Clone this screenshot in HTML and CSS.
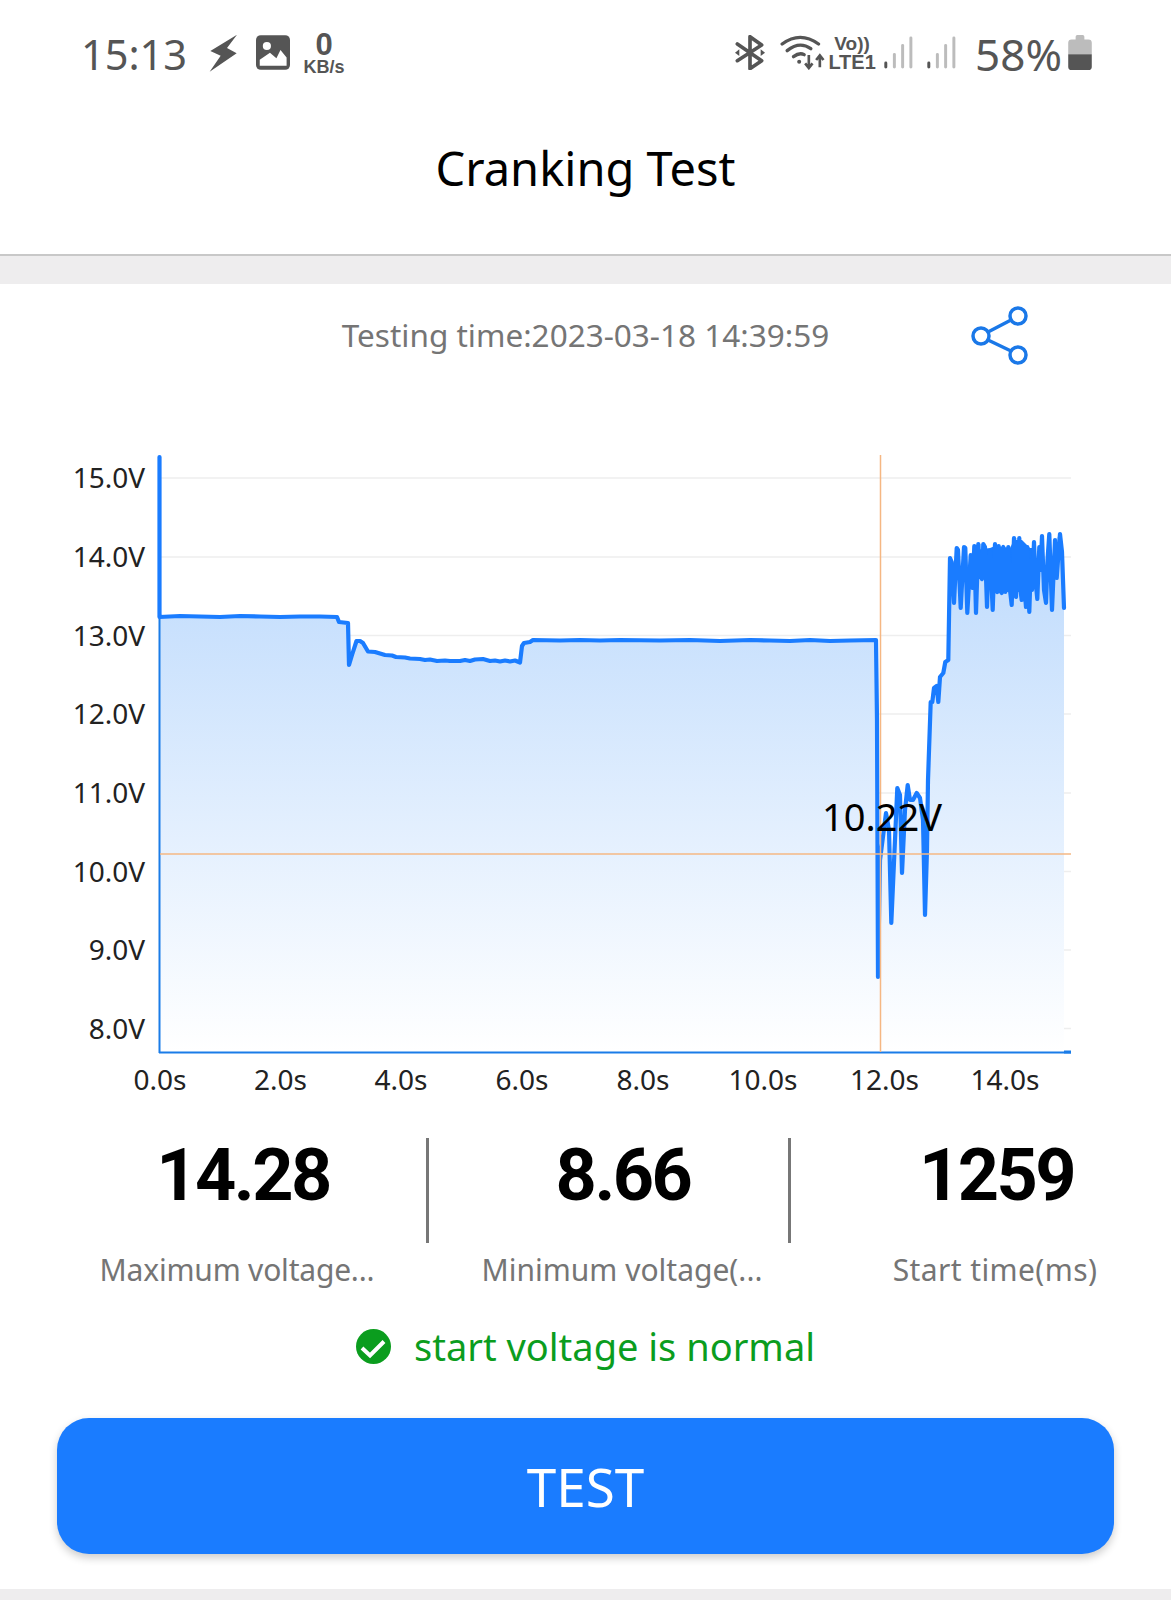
FILE: index.html
```html
<!DOCTYPE html>
<html lang="en">
<head>
  <meta charset="UTF-8" />
  <title>Cranking Test</title>
  <link rel="stylesheet" href="styles.css">
</head>
<body>
  <div class="status-bar">
    <div class="status-left">
      <span class="clock">15:13</span>
      <svg class="icon-bolt" viewBox="440 70 90 120"><polygon points="527,75 447,124 478,138 445,186 526,131 497,115" /></svg>
      <svg class="icon-image" viewBox="590 78 100 102">
        <rect x="590" y="78" width="100" height="102" rx="14" fill="#555" />
        <circle cx="622" cy="110" r="12" fill="#fff" />
        <path d="M601 168 V150 L631 130 L650 146 L662 122 L680 144 V168 Z" fill="#fff" />
      </svg>
      <div class="net-speed">
        <span class="net-value">0</span>
        <span class="net-unit">KB/s</span>
      </div>
    </div>
    <div class="status-right">
      <svg class="icon-bt" viewBox="45 75 90 105">
        <path d="M52 102 L125 152 L90 176 V80 L125 105 L52 152" fill="none" stroke="#555" stroke-width="11" stroke-linejoin="round" stroke-linecap="round" />
        <polygon points="45,128 58,118 58,138" fill="#555" />
        <polygon points="135,128 122,118 122,138" fill="#555" />
      </svg>
      <svg class="icon-wifi" viewBox="180 75 140 105">
        <g fill="none" stroke="#555" stroke-width="10" stroke-linecap="round">
          <path d="M186 102 Q240 62 295 102" />
          <path d="M201 122 Q238 92 272 116" />
          <path d="M220 140 Q238 126 252 134" />
        </g>
        <circle cx="237" cy="155" r="6" fill="#555" />
        <g fill="none" stroke="#555" stroke-width="8">
          <path d="M266 135 V172 M255 160 L266 174 L277 160" />
          <path d="M299 172 V137 M288 150 L299 136 L310 150" />
        </g>
      </svg>
      <div class="volte">
        <span class="volte-top">Vo))</span>
        <span class="volte-bottom">LTE1</span>
      </div>
      <svg class="icon-signal" viewBox="490 78 90 100">
        <line class="bar-on" x1="495" y1="160" x2="495" y2="172" />
        <line class="bar-off" x1="521" y1="134" x2="521" y2="172" />
        <line class="bar-off" x1="546" y1="107" x2="546" y2="172" />
        <line class="bar-off" x1="571" y1="84" x2="571" y2="172" />
      </svg>
      <svg class="icon-signal" viewBox="490 78 90 100">
        <line class="bar-on" x1="495" y1="160" x2="495" y2="172" />
        <line class="bar-off" x1="521" y1="134" x2="521" y2="172" />
        <line class="bar-off" x1="546" y1="107" x2="546" y2="172" />
        <line class="bar-off" x1="571" y1="84" x2="571" y2="172" />
      </svg>
      <span class="battery-text">58%</span>
      <svg class="icon-battery" viewBox="1045 75 70 104">
        <path d="M1067 88 V80 Q1067 75 1072 75 H1088 Q1093 75 1093 80 V88 H1105 Q1115 88 1115 98 V132 H1045 V98 Q1045 88 1055 88 Z" fill="#bcbcbc" />
        <path d="M1045 132 H1115 V169 Q1115 179 1105 179 H1055 Q1045 179 1045 169 Z" fill="#555" />
      </svg>
    </div>
  </div>

  <header class="title-bar">
    <h1>Cranking Test</h1>
  </header>

  <main class="card">
    <div class="time-row">
      <span class="test-time">Testing time:2023-03-18 14:39:59</span>
      <svg class="icon-share" viewBox="970 304 60 62">
        <g fill="none" stroke="#1a78e8" stroke-width="3.5">
          <circle cx="1018" cy="316" r="8" />
          <circle cx="981" cy="336" r="8" />
          <circle cx="1018" cy="355" r="8" />
          <path d="M1011 320 L988 332 M988 340 L1011 351" />
        </g>
      </svg>
    </div>

    <!-- chart is drawn in page coordinates, viewBox starts at y=440 -->
    <svg class="chart" viewBox="0 440 1171 660">
      <defs>
        <linearGradient id="areaFill" gradientUnits="userSpaceOnUse" x1="0" y1="600" x2="0" y2="1052">
          <stop offset="0" stop-color="#c6dffd" />
          <stop offset="1" stop-color="#ffffff" />
        </linearGradient>
      </defs>

      <g class="grid">
        <line x1="160" y1="478" x2="1071" y2="478" />
        <line x1="160" y1="557" x2="1071" y2="557" />
        <line x1="160" y1="635.5" x2="1071" y2="635.5" />
        <line x1="160" y1="714" x2="1071" y2="714" />
        <line x1="160" y1="793" x2="1071" y2="793" />
        <line x1="160" y1="871.5" x2="1071" y2="871.5" />
        <line x1="160" y1="950" x2="1071" y2="950" />
        <line x1="160" y1="1028.5" x2="1071" y2="1028.5" />
      </g>

      <path class="area" d="M160 1052 V617 H337 L339 622 L348 623 L349 665 L352 655 L356.5 641 L360 641 L363 643 L368 651.5 L375 652 L380 653.5 L385 655 L392 655.5 L396 657 L405 657.5 L420 659 L430 659.5 L437 661 L460 661 L475 659.5 L483 659 L490 661 L520 662.5 L522 646 L524 643 L530 642 L533 640 L876 640 L877 720 L878 977 L880 860 L886 813 L889 830 L891.3 923 L897.3 788 L900 795 L902 873 L905 810 L907.7 785 L910 800 L913 800 L916.7 793 L920 798 L923 820 L925 915 L927 850 L928 780 L930.7 702 L932.3 702 L934 688 L936.7 686 L938.3 702 L940 677 L943.3 673 L945.3 662 L948.3 660 L950 558 L954 603 L956.7 548 L960.7 608 L964 547 L967.3 613 L970.7 555 L974.3 546 L976 613 L978.3 544 L983.3 544 L987 607 L990 552 L992.7 610 L995 544 L998.7 546 L1003.3 547 L1008.3 547 L1011.7 605 L1014 538 L1019.3 538 L1023.3 546 L1027.3 547 L1029.3 612 L1034 542 L1037.3 599 L1039.3 547 L1042 536 L1046 603 L1049.3 534 L1052 610 L1055 540 L1060 534 L1062 552 L1064 608 V1052 Z" />

      <line class="axis" x1="159.5" y1="617" x2="159.5" y2="1053" />
      <line class="axis" x1="159" y1="1052.5" x2="1071" y2="1052.5" />
      <line class="axis-end" x1="1064" y1="1052" x2="1071" y2="1052" />

      <!-- solid part of the noise after the engine starts -->
      <path class="curve-band" d="M975 550 L990 548 L995 546 L1010 548 L1014 540 L1022 540 L1030 548 L1036 548 L1036 585 L1030 590 L1000 592 L995 592 L990 560 L975 570 Z" />

      <path class="curve" d="M159.5 457 V617 L180 616 L200 616.5 L220 617 L240 616 L260 616.5 L280 617 L300 616.5 L320 616.5 L337 617 L339 622 L348 623 L349 665 L352 655 L356.5 641 L360 641 L363 643 L368 651.5 L375 652 L380 653.5 L385 655 L392 655.5 L396 657 L405 657.5 L410 658.5 L420 659 L425 660 L430 659.5 L437 661 L445 660.5 L450 661 L460 661 L465 660 L470 661 L475 659.5 L483 659 L490 661 L495 660.5 L500 661.5 L505 660.5 L510 661.5 L515 660.5 L520 662.5 L522 646 L524 643 L530 642 L533 640 L560 640.5 L580 640 L600 640.5 L620 640 L660 640.5 L690 640 L720 641 L750 640 L770 640.5 L790 641 L810 640 L830 641 L850 640.5 L876 640 L877 720 L878 977 L880 860 L886 813 L889 830 L891.3 923 L897.3 788 L900 795 L902 873 L905 810 L907.7 785 L910 800 L913 800 L916.7 793 L920 798 L923 820 L925 915 L927 850 L928 780 L930.7 702 L932.3 702 L934 688 L936.7 686 L938.3 702 L940 677 L943.3 673 L945.3 662 L948.3 660 L950 558 L951.7 562 L954 603 L956.7 548 L958 550 L960.7 608 L964 547 L965.3 548 L967.3 613 L970.7 555 L972.7 588 L974.3 546 L976 613 L978.3 544 L980 575 L982 579 L983.3 544 L985 547 L987 607 L988.5 560 L990 552 L992.7 610 L995 544 L996 590 L997.3 592 L998.7 546 L1000 590 L1001.7 593 L1002.5 550 L1003.3 547 L1005.3 592 L1006.5 550 L1007.5 590 L1008.3 547 L1010 590 L1011.7 605 L1014 538 L1015 590 L1016 597 L1017.5 545 L1018.5 590 L1019.3 538 L1020.5 590 L1021.7 600 L1023.3 546 L1024.7 590 L1026 607 L1027.3 547 L1028.3 590 L1029.3 612 L1031 560 L1032 590 L1034 542 L1035.5 580 L1037.3 599 L1039.3 547 L1040.5 570 L1042 536 L1044 590 L1046 603 L1047.5 560 L1049.3 534 L1052 610 L1055 540 L1056.7 578 L1058 560 L1060 534 L1062 552 L1064 608" />

      <line class="cross" x1="160" y1="854" x2="1071" y2="854" />
      <line class="cross" x1="880.5" y1="455" x2="880.5" y2="1052" />
      <text class="cross-label" x="882" y="831">10.22V</text>

      <g class="y-labels">
        <text x="145" y="488">15.0V</text>
        <text x="145" y="567">14.0V</text>
        <text x="145" y="645.5">13.0V</text>
        <text x="145" y="724">12.0V</text>
        <text x="145" y="803">11.0V</text>
        <text x="145" y="881.5">10.0V</text>
        <text x="145" y="960">9.0V</text>
        <text x="145" y="1038.5">8.0V</text>
      </g>
      <g class="x-labels">
        <text x="160" y="1090">0.0s</text>
        <text x="280.5" y="1090">2.0s</text>
        <text x="401" y="1090">4.0s</text>
        <text x="522" y="1090">6.0s</text>
        <text x="643" y="1090">8.0s</text>
        <text x="763" y="1090">10.0s</text>
        <text x="884.5" y="1090">12.0s</text>
        <text x="1005" y="1090">14.0s</text>
      </g>
    </svg>

    <div class="stats">
      <div class="stat stat-max">
        <div class="stat-value">14.28</div>
        <div class="stat-label">Maximum voltage...</div>
      </div>
      <div class="stat stat-min">
        <div class="stat-value">8.66</div>
        <div class="stat-label">Minimum voltage(...</div>
      </div>
      <div class="stat stat-time">
        <div class="stat-value">1259</div>
        <div class="stat-label">Start time(ms)</div>
      </div>
    </div>

    <div class="result">
      <svg class="icon-check" viewBox="0 0 35 35">
        <circle cx="17.5" cy="17.5" r="17.5" fill="#0b9d1e" />
        <path d="M6 19 L14 26.5 L28 12.5" fill="none" stroke="#fff" stroke-width="4" />
      </svg>
      <span class="result-text">start voltage is normal</span>
    </div>

    <button class="test-btn">TEST</button>
  </main>

  <div class="bottom-band"></div>
</body>
</html>
```

FILE: styles.css
```css
body {
  margin: 0;
  font-family: "Noto Sans", sans-serif;
  background-color: #eeedee;
}

.status-bar,
.title-bar,
.card {
  background-color: #fff;
}

.status-bar {
  height: 105px;
  display: flex;
  justify-content: space-between;
  color: #555;
}

.status-left,
.status-right {
  display: flex;
  align-items: flex-start;
  padding-top: 35px;
}

.status-left {
  padding-left: 81px;
}

.status-right {
  padding-right: 79px;
}

.clock {
  font-size: 41.5px;
  line-height: 38px;
  width: 127px;
}

.icon-bolt {
  width: 30px;
  height: 40px;
  fill: #555;
  margin-top: -2px;
  margin-right: 18px;
}

.icon-image {
  width: 34px;
  height: 35px;
  margin-right: 12px;
}

.net-speed {
  width: 44px;
  display: flex;
  flex-direction: column;
  align-items: center;
  font-family: "Liberation Sans", sans-serif;
  font-weight: bold;
  margin-top: -3px;
}

.net-value {
  font-size: 31px;
  line-height: 26px;
}

.net-unit {
  font-size: 18px;
  line-height: 18px;
}

.icon-bt {
  width: 30px;
  height: 35px;
  margin-right: 15px;
}

.icon-wifi {
  width: 47px;
  height: 35px;
  margin-right: 4px;
}

.volte {
  width: 42px;
  display: flex;
  flex-direction: column;
  align-items: center;
  font-family: "Liberation Sans", sans-serif;
  font-weight: bold;
  margin-right: 11px;
}

.volte-top {
  font-size: 19px;
  line-height: 17px;
}

.volte-bottom {
  font-size: 20px;
  line-height: 20px;
}

.icon-signal {
  width: 30px;
  height: 33px;
  margin-right: 13px;
  margin-top: 1px;
}

.bar-on,
.bar-off {
  stroke-width: 9;
  stroke-linecap: round;
}

.bar-on {
  stroke: #555;
}

.bar-off {
  stroke: #bcbcbc;
}

.icon-signal + .icon-signal {
  margin-right: 18px;
}

.battery-text {
  font-size: 44px;
  line-height: 38px;
  margin-right: 6px;
}

.icon-battery {
  width: 24px;
  height: 35px;
}

.title-bar {
  height: 151px;
  border-bottom: 2px solid #c8c8c8;
  box-sizing: border-box;
  display: flex;
  justify-content: center;
}

.title-bar h1 {
  margin: 0;
  font-size: 47px;
  font-weight: 400;
  line-height: 64px;
  padding-top: 31px;
  color: #000;
}

.card {
  margin-top: 28px;
  height: 1305px;
  display: flex;
  flex-direction: column;
}

.time-row {
  height: 156px;
  position: relative;
  display: flex;
  justify-content: center;
}

.test-time {
  font-size: 31.5px;
  line-height: 40px;
  padding-top: 31px;
  color: #757575;
}

.icon-share {
  position: absolute;
  left: 970px;
  top: 20px;
  width: 60px;
  height: 62px;
}

.chart {
  display: block;
  width: 1171px;
  height: 660px;
}

.grid line {
  stroke: #eeeeee;
  stroke-width: 1.5;
}

.area {
  fill: url(#areaFill);
}

.axis {
  stroke: #1a7ce8;
  stroke-width: 2;
}

.axis-end {
  stroke: #1a7ce8;
  stroke-width: 3;
}

.curve {
  fill: none;
  stroke: #1a7cff;
  stroke-width: 4.2;
  stroke-linejoin: round;
  stroke-linecap: round;
}

.curve-band {
  fill: #1a7cff;
}

.cross {
  stroke: #f5b783;
  stroke-width: 1.5;
}

.cross-label {
  font-size: 38px;
  text-anchor: middle;
  fill: #000;
}

.y-labels text,
.x-labels text {
  font-size: 28px;
  fill: #222;
}

.y-labels text {
  text-anchor: end;
}

.x-labels text {
  text-anchor: middle;
}

.stats {
  display: flex;
  margin-top: 38px;
}

.stat {
  display: flex;
  flex-direction: column;
  box-sizing: border-box;
  text-align: center;
}

.stat-max {
  width: 426px;
  padding-left: 60px;
}

.stat-min {
  width: 362px;
}

.stat-time {
  width: 381px;
}

.stat-value {
  height: 105px;
  font-family: Roboto, sans-serif;
  font-size: 72px;
  font-weight: 700;
  line-height: 76px;
  letter-spacing: -2.5px;
  color: #000;
}

.stat-min .stat-value,
.stat-time .stat-value {
  border-left: 3px solid #777;
}

.stat-min .stat-value {
  padding-left: 29px;
}

.stat-time .stat-value {
  padding-left: 33px;
}

.stat-label {
  font-size: 30px;
  line-height: 44px;
  margin-top: 5px;
  color: #757575;
  white-space: nowrap;
}

.stat-max .stat-label {
  padding-right: 12px;
  letter-spacing: -0.2px;
}

.stat-min .stat-label {
  padding-left: 30px;
}

.stat-time .stat-label {
  padding-left: 33px;
  letter-spacing: 0.4px;
}

.result {
  display: flex;
  align-items: center;
  justify-content: center;
  gap: 23px;
  margin-top: 24px;
  height: 60px;
}

.icon-check {
  width: 35px;
  height: 35px;
}

.result-text {
  font-size: 38px;
  line-height: 50px;
  color: #0b9d1e;
}

.test-btn {
  display: block;
  margin: 42px 57px 0;
  height: 136px;
  border: none;
  border-radius: 32px;
  background-color: #1a7cff;
  color: #fff;
  font-family: "Noto Sans", sans-serif;
  font-size: 53px;
  box-shadow: 0 4px 8px rgba(0, 0, 0, 0.2);
}

.bottom-band {
  height: 11px;
}
```
